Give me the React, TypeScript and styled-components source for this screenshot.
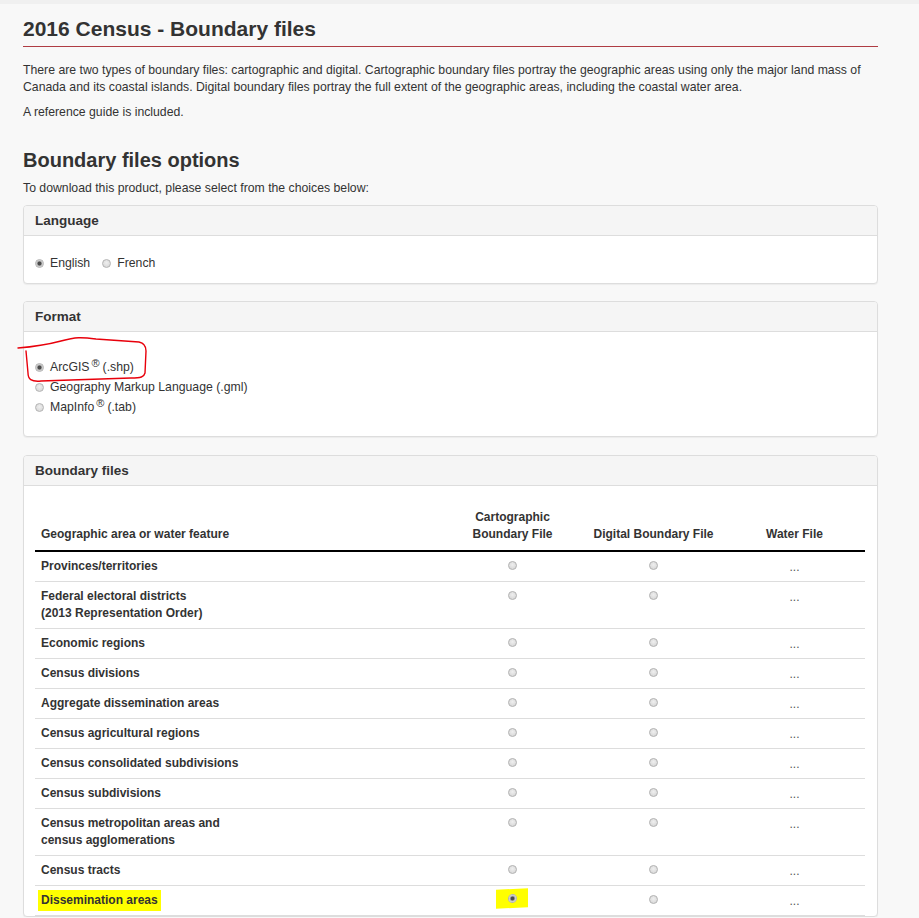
import React from "react";
import styled, { createGlobalStyle } from "styled-components";

const GlobalStyle = createGlobalStyle`
  html, body { margin: 0; padding: 0; }
  body {
    background: #f8f8f8;
    font-family: "Liberation Sans", Arial, sans-serif;
    color: #333;
  }
`;

const TopBar = styled.div`
  height: 4px;
  background: #f0f0f0;
`;

const Main = styled.main`
  padding: 0 41px 0 23px;
`;

const Title = styled.h1`
  margin: 13px 0 0;
  font-size: 21px;
  line-height: 23px;
  font-weight: 700;
  color: #333;
  padding-bottom: 6px;
  border-bottom: 1px solid #af3c43;
`;

const Para = styled.p<{ $top?: number }>`
  margin: ${(p) => p.$top ?? 0}px 0 0;
  font-size: 12.25px;
  line-height: 17px;
  color: #333;
`;

const SubTitle = styled.h2`
  margin: 28px 0 0;
  font-size: 20px;
  line-height: 22px;
  font-weight: 700;
  color: #333;
`;

const Panel = styled.section<{ $top: number }>`
  position: relative;
  margin-top: ${(p) => p.$top}px;
  background: #fff;
  border: 1px solid #ddd;
  border-radius: 4px;
  box-shadow: 0 1px 1px rgba(0, 0, 0, 0.05);
`;

const PanelHeading = styled.h3`
  margin: 0;
  height: 30px;
  box-sizing: border-box;
  padding: 0 11px;
  display: flex;
  align-items: center;
  background: #f5f5f5;
  border-bottom: 1px solid #ddd;
  border-radius: 3px 3px 0 0;
  font-size: 13.5px;
  font-weight: 700;
  color: #333;
`;

const PanelBody = styled.div<{ $pad: string }>`
  padding: ${(p) => p.$pad};
`;

const OptionRow = styled.div<{ $inline?: boolean }>`
  display: flex;
  flex-direction: ${(p) => (p.$inline ? "row" : "column")};
  gap: ${(p) => (p.$inline ? "12px" : "0")};
`;

const Option = styled.label`
  display: flex;
  align-items: center;
  height: 20px;
  font-size: 12.25px;
  color: #333;
`;

const Radio = styled.span<{ $checked?: boolean }>`
  display: inline-block;
  box-sizing: border-box;
  width: 9px;
  height: 9px;
  border-radius: 50%;
  border: 1px solid #b4b4b4;
  background: ${(p) =>
    p.$checked
      ? "radial-gradient(circle, #4a4a4a 0 1.6px, #a8a8a8 2.3px, #dedede 3.4px)"
      : "radial-gradient(circle at 50% 40%, #efefef, #d2d2d2)"};
  flex: none;
`;

const OptRadio = styled(Radio)`
  margin: 0 6px 0 0;
`;

const Sup = styled.span`
  display: inline-block;
  font-size: 11px;
  line-height: 1;
  margin: 0 3px 0 2px;
  position: relative;
  top: -4px;
`;

const Scribble = styled.svg`
  position: absolute;
  left: -10px;
  top: 30px;
  width: 150px;
  height: 60px;
  overflow: visible;
  pointer-events: none;
`;

const Table = styled.table`
  width: 100%;
  border-collapse: collapse;
  table-layout: fixed;
  font-size: 12px;
  line-height: 17px;
`;

const Th = styled.th<{ $center?: boolean }>`
  padding: 6px 6px 7px;
  text-align: ${(p) => (p.$center ? "center" : "left")};
  vertical-align: bottom;
  font-weight: 700;
  color: #333;
  border-bottom: 2px solid #000;
`;

const Td = styled.td<{ $center?: boolean; $bold?: boolean }>`
  padding: 6px 6px 6px;
  text-align: ${(p) => (p.$center ? "center" : "left")};
  vertical-align: top;
  font-weight: ${(p) => (p.$bold ? 700 : 400)};
  color: #333;
  border-bottom: 1px solid #ddd;
`;

const CellRadio = styled(Radio)`
  vertical-align: middle;
  margin-top: -3px;
`;

const Dots = styled.span`
  color: #555;
  position: relative;
  top: 1px;
`;

const Marker = styled.span`
  background: #ffff00;
  padding: 3px 3px 4px 3px;
  margin: 0 -3px;
`;

const RadioMarker = styled.span`
  display: inline-block;
  background: #ffff00;
  padding: 5px 11px 5px 12px;
  margin: -5px -11px 0 -12px;
  vertical-align: middle;
  line-height: 0;
  transform: skewY(-3deg);
`;

const rows: { name: React.ReactNode; selected?: boolean }[] = [
  { name: "Provinces/territories" },
  { name: <>Federal electoral districts<br />(2013 Representation Order)</> },
  { name: "Economic regions" },
  { name: "Census divisions" },
  { name: "Aggregate dissemination areas" },
  { name: "Census agricultural regions" },
  { name: "Census consolidated subdivisions" },
  { name: "Census subdivisions" },
  { name: <>Census metropolitan areas and<br />census agglomerations</> },
  { name: "Census tracts" },
  { name: "Dissemination areas", selected: true },
];

export default function App() {
  return (
    <>
      <GlobalStyle />
      <TopBar />
      <Main>
        <Title>2016 Census - Boundary files</Title>
        <Para $top={15}>
          There are two types of boundary files: cartographic and digital. Cartographic boundary files portray the
          geographic areas using only the major land mass of Canada and its coastal islands. Digital boundary files
          portray the full extent of the geographic areas, including the coastal water area.
        </Para>
        <Para $top={8}>A reference guide is included.</Para>

        <SubTitle>Boundary files options</SubTitle>
        <Para $top={9}>To download this product, please select from the choices below:</Para>

        <Panel $top={8}>
          <PanelHeading>Language</PanelHeading>
          <PanelBody $pad="17px 11px 10px">
            <OptionRow $inline>
              <Option>
                <OptRadio $checked />
                English
              </Option>
              <Option>
                <OptRadio />
                French
              </Option>
            </OptionRow>
          </PanelBody>
        </Panel>

        <Panel $top={17}>
          <PanelHeading>Format</PanelHeading>
          <PanelBody $pad="25px 11px 19px">
            <OptionRow>
              <Option>
                <OptRadio $checked />
                ArcGIS<Sup>®</Sup>(.shp)
              </Option>
              <Option>
                <OptRadio />
                Geography Markup Language (.gml)
              </Option>
              <Option>
                <OptRadio />
                MapInfo<Sup>®</Sup>(.tab)
              </Option>
            </OptionRow>
          </PanelBody>
          <Scribble viewBox="0 0 150 60">
            <path
              d="M4,16 C17,15 32,13 47,9 C62,5 67,5 82,7 L125,10 C130,11 132,14 132,19 L131,41 C130,45 127,46 117,46 L27,49 C17,50 14,47 14,41 L12,19"
              fill="none"
              stroke="#e8000b"
              strokeWidth="1.4"
              strokeLinecap="round"
              strokeLinejoin="round"
            />
          </Scribble>
        </Panel>

        <Panel $top={18}>
          <PanelHeading>Boundary files</PanelHeading>
          <PanelBody $pad="17px 12px 0 11px">
            <Table>
              <colgroup>
                <col style={{ width: 407 }} />
                <col />
                <col />
                <col />
              </colgroup>
              <thead>
                <tr>
                  <Th>Geographic area or water feature</Th>
                  <Th $center>
                    Cartographic
                    <br />
                    Boundary File
                  </Th>
                  <Th $center>Digital Boundary File</Th>
                  <Th $center>Water File</Th>
                </tr>
              </thead>
              <tbody>
                {rows.map((r, i) => (
                  <tr key={i}>
                    <Td $bold>{r.selected ? <Marker>{r.name}</Marker> : r.name}</Td>
                    <Td $center>
                      {r.selected ? (
                        <RadioMarker>
                          <CellRadio $checked style={{ marginTop: 0 }} />
                        </RadioMarker>
                      ) : (
                        <CellRadio />
                      )}
                    </Td>
                    <Td $center>
                      <CellRadio />
                    </Td>
                    <Td $center>
                      <Dots>...</Dots>
                    </Td>
                  </tr>
                ))}
              </tbody>
            </Table>
          </PanelBody>
        </Panel>
      </Main>
    </>
  );
}
